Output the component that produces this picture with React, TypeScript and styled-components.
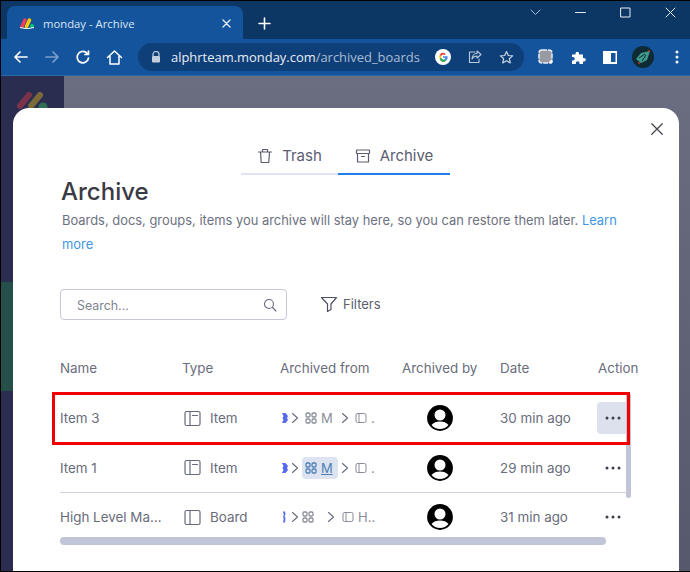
import React from 'react';
import styled, { createGlobalStyle } from 'styled-components';

const Global = createGlobalStyle`
  html, body { margin: 0; padding: 0; background: #000; }
  body { width: 690px; height: 572px; overflow: hidden; font-family: Inter, "Liberation Sans", sans-serif; }
  * { box-sizing: border-box; }
`;
const Frame = styled.div`
  width: 690px; height: 570px; margin-top: 1px; padding-left: 1px;
  display: flex; flex-direction: column; overflow: hidden;
`;
const TabStrip = styled.div`
  height: 38px; flex: none; background: #0c3764; display: flex; align-items: flex-end; padding-left: 6px; position: relative;
`;
const Tab = styled.div`
  width: 236px; height: 33px; background: #14549c; border-radius: 8px 8px 0 0;
  display: flex; align-items: center; padding: 1px 12px 0 12px; gap: 8px;
`;
const TabTitle = styled.span`
  flex: 1; color: #dbe6f2; font: 11.3px "Open Sans", "Liberation Sans", sans-serif;
`;
const NewTab = styled.div`
  margin: 0 0 0 15px; height: 33px; display: flex; align-items: center; padding-top: 1px;
`;
const WindowControls = styled.div`
  margin-left: auto; align-self: flex-start; display: flex; align-items: center; height: 22px; gap: 34px; padding-right: 14px;
`;
const Toolbar = styled.div`
  height: 37px; flex: none; background: #14549c; display: flex; align-items: center; padding: 0 0 0 12px; border-bottom: 1px solid #2c67a8;
`;
const NavGroup = styled.div`
  display: flex; align-items: center; gap: 15px;
`;
const Omnibox = styled.div`
  margin-left: 15px; width: 386px; height: 28px; border-radius: 14px; background: #0f3f78;
  display: flex; align-items: center; padding: 0 10px 0 13px; gap: 10px;
`;
const Url = styled.span`
  flex: 1; font: 12.95px "Open Sans", "Liberation Sans", sans-serif; color: #e7eef6; white-space: nowrap;
`;
const UrlPath = styled.span`
  color: #a9bdd4;
`;
const OmniIcons = styled.div`
  display: flex; align-items: center; gap: 16px;
`;
const ExtIcons = styled.div`
  margin-left: 14px; display: flex; align-items: center; gap: 17px;
`;
const ProfileIcon = styled.div`
  margin: 0 4px 0 -2px; line-height: 0;
`;
const Backdrop = styled.div`
  flex: 1; position: relative; background: linear-gradient(180deg, #6b6e80, #56596c); display: flex;
`;
const SideBar = styled.div`
  width: 63px; background: #2a2c50; position: relative; overflow: hidden;
`;
const SideBand = styled.div`
  margin-top: 206px; height: 109px; background: #25504a;
`;
const Logo = styled.svg`
  position: absolute; left: 15px; top: 15px;
`;
const Modal = styled.div`
  position: absolute; left: 12px; top: 32px; width: 666px; bottom: 0; background: #fff; border-radius: 16px 16px 0 0;
  padding: 24px 0 0 49px; color: #4f5263;
`;
const CloseBtn = styled.div`
  position: absolute; right: 15px; top: 14px; line-height: 0;
`;
const Tabs = styled.div`
  display: flex; margin-left: 179px; width: 209px; height: 43px;
`;
const TabBtn = styled.div<{ $active?: boolean; $w: number }>`
  width: ${p => p.$w}px; display: flex; align-items: center; justify-content: center; gap: 9px;
  height: 43px; padding-top: 6px; font-size: 15px; color: #5b5e6f;
  border-bottom: 2px solid ${p => (p.$active ? '#1f7fe8' : '#dfe3f2')};
`;
const Title = styled.h1`
  margin: 1px 0 0 -1px; font: 500 24px/32px Inter, sans-serif; color: #3a3b45;
`;
const Desc = styled.p`
  margin: 0; width: 570px; font-size: 12.92px; line-height: 24px; color: #6e7182;
`;
const Link = styled.a`
  color: #3f97e2;
`;
const SearchRow = styled.div`
  display: flex; align-items: center; margin: 33px 0 0 -2px;
`;
const SearchBox = styled.div`
  width: 227px; height: 31px; border: 1px solid #c5c7d9; border-radius: 4px; display: flex; align-items: center;
  padding: 1px 9px 0 16px; justify-content: space-between; color: #80838f; font-size: 12.4px;
`;
const Filters = styled.div`
  margin-left: 33px; display: flex; align-items: center; gap: 5px; padding-bottom: 2px; font-size: 13px; color: #5b5e6f;
`;
const Table = styled.div`
  margin: 36px 0 0 -2px; width: 570px; position: relative;
`;
const HeadRow = styled.div`
  display: grid; grid-template-columns: 122px 98px 122px 98px 98px 40px; height: 24px; align-items: center;
  font-size: 13.4px; color: #6a6d7c; white-space: nowrap;
`;
const Row = styled.div<{ $line?: boolean }>`
  display: grid; grid-template-columns: 122px 98px 122px 98px 98px 32px; height: 49.5px; align-items: center;
  font-size: 13.4px; color: #696c7a; white-space: nowrap;
  border-bottom: 1px solid ${p => (p.$line ? '#d0d4e6' : 'transparent')};
`;
const Rows = styled.div`
  margin-top: 14px;
`;
const TypeCell = styled.div`
  display: flex; align-items: center; gap: 9px; padding-left: 2px;
`;
const Path = styled.div`
  display: flex; align-items: center; font-size: 13px; color: #8a8d9a; gap: 2px; padding-left: 2px;
`;
const Crumb = styled.div<{ $hover?: boolean; $w: number; $pad: number }>`
  display: flex; align-items: center; gap: 4px; height: 22px; border-radius: 4px; width: ${p => p.$w}px; padding-left: ${p => p.$pad}px;
  background: ${p => (p.$hover ? '#dde3f0' : 'transparent')};
  color: ${p => (p.$hover ? '#4d7fb5' : '#8a8d9a')};
  text-decoration: ${p => (p.$hover ? 'underline' : 'none')};
`;
const AvatarCell = styled.div`
  padding-left: 25px; line-height: 0;
`;
const ActionCell = styled.div<{ $hover?: boolean }>`
  width: 32px; height: 32px; border-radius: 4px; display: flex; align-items: center; justify-content: center;
  margin-left: -1px;
  background: ${p => (p.$hover ? '#dde1ee' : 'transparent')};
`;
const VScroll = styled.div`
  position: absolute; left: 566px; top: 37px; width: 5px; height: 105px; background: #c0c5d7; border-radius: 3px;
`;
const HScroll = styled.div`
  position: absolute; left: 0; top: 181px; width: 546px; height: 8px; background: #c0c5d7; border-radius: 4px;
`;
const RedBox = styled.div`
  position: absolute; left: -8px; top: 36px; width: 578px; height: 53px; border: 3px solid #f00000;
`;

const W = ({ children, s = 16, sw = 1.5, c = 'currentColor', v = 24 }: any) => (
  <svg width={s} height={s} viewBox={`0 0 ${v} ${v}`} fill="none" stroke={c} strokeWidth={sw} strokeLinecap="round" strokeLinejoin="round">{children}</svg>
);
const ItemIcon = () => (
  <W s={17} v={17} sw={1.2} c="#676a7c"><rect x="1" y="1.5" width="15" height="14" rx="1.5" /><path d="M6 1.5v14M8.5 5.5h5" /></W>
);
const BoardIcon = () => (
  <W s={17} v={17} sw={1.2} c="#676a7c"><rect x="1" y="1.5" width="15" height="14" rx="1.5" /><path d="M6 1.5v14" /></W>
);
const Grid4 = ({ c = '#8a8d9a' }: { c?: string }) => (
  <W s={12} v={12} sw={1.3} c={c}><rect x="1" y="1" width="4" height="4" rx="1.2" /><rect x="7" y="1" width="4" height="4" rx="1.2" /><rect x="1" y="7" width="4" height="4" rx="1.2" /><rect x="7" y="7" width="4" height="4" rx="1.2" /></W>
);
const Chevron = () => (
  <W s={10} v={10} sw={1.1} c="#676a7c"><path d="M2.5 0.5l5 4.500-5 4.500" /></W>
);
const Panel = () => (
  <W s={12} v={12} sw={1} c="#8a8d9a"><rect x="1" y="1.5" width="10" height="9" rx="1.5" /><path d="M4 1.5v9" /></W>
);
const Blob = ({ thin }: { thin?: boolean }) => (
  <svg width="6" height="12" viewBox="0 0 6 12">
    {thin
      ? <path d="M1 0.500h2l.5 3-1 1.500 1 2-.5 4.500H1l.8-4-.8-2 .8-1.500z" fill="#5668ee" />
      : <path d="M0 1l3.500 0 2.500 3-1 2 1 2-2.500 3-3.500 0 1.500-3-1-2 1-2z" fill="#5668ee" />}
  </svg>
);
const Avatar = () => (
  <svg width="26" height="26" viewBox="0 0 26 26">
    <circle cx="13" cy="13" r="12.9" fill="#000" />
    <circle cx="13" cy="10" r="5.500" fill="#fff" />
    <path d="M4.500 20c2-2.500 5-3.500 8.500-3.500s6.500 1 8.500 3.500c-2 2.500-5.200 4-8.500 4s-6.500-1.500-8.500-4z" fill="#fff" />
  </svg>
);
const Dots = () => (
  <svg width="16" height="4" viewBox="0 0 16 4" fill="#3b3d4a"><circle cx="2" cy="2" r="1.500" /><circle cx="8" cy="2" r="1.500" /><circle cx="14" cy="2" r="1.500" /></svg>
);

const rows = [
  { name: 'Item 3', type: 'Item', date: '30 min ago', hoverAction: true },
  { name: 'Item 1', type: 'Item', date: '29 min ago', hoverCrumb: true, line: true },
  { name: 'High Level Ma…', type: 'Board', date: '31 min ago', board: true },
];

export default function App() {
  return (
    <Frame>
      <Global />
      <TabStrip>
        <Tab>
          <svg width="16" height="12" viewBox="0 0 16 12">
            <path d="M3 9.500L6 3" stroke="#f23c5a" strokeWidth="3.500" strokeLinecap="round" />
            <path d="M7.500 9.500L10.500 3" stroke="#ffcb00" strokeWidth="3.500" strokeLinecap="round" />
            <circle cx="13" cy="9" r="2" fill="#00ca72" />
            <path d="M1 10.500q7 2.500 14 0" stroke="#fff" strokeWidth="1" fill="none" />
          </svg>
          <TabTitle>monday - Archive</TabTitle>
          <W s={9} v={9} sw={1.4} c="#e4ecf5"><path d="M1 1l7 7M8 1l-7 7" /></W>
        </Tab>
        <NewTab>
          <W s={13} v={13} sw={1.6} c="#fff"><path d="M6.500 1v11M1 6.500h11" /></W>
        </NewTab>
        <WindowControls>
          <W s={11} v={11} sw={1} c="#a9bdd4"><path d="M1 3l4.500 4.500L10 3" /></W>
          <W s={11} v={11} sw={1} c="#dfe7f1"><path d="M0.500 5.500h10" /></W>
          <W s={11} v={11} sw={1} c="#e6edf5"><rect x="1" y="1" width="9" height="9" /></W>
          <W s={11} v={11} sw={1} c="#e6edf5"><path d="M1 1l9 9M10 1l-9 9" /></W>
        </WindowControls>
      </TabStrip>
      <Toolbar>
        <NavGroup>
          <W s={16} v={16} sw={1.7} c="#fff"><path d="M14 8H2M7 3L2 8l5 5" /></W>
          <W s={16} v={16} sw={1.7} c="#7c9fc8"><path d="M2 8h12M9 3l5 5-5 5" /></W>
          <W s={16} v={16} sw={1.7} c="#fff"><path d="M13.500 9a5.700 5.700 0 1 1-1.300-4.600M13.500 2v3.500H10" /></W>
          <W s={17} v={17} sw={1.5} c="#fff"><path d="M1.500 8.500L8.500 2l7 6.500M4 7.500v7.500h9V7.500" /></W>
        </NavGroup>
        <Omnibox>
          <svg width="10" height="12" viewBox="0 0 10 12"><path d="M2 5V3.500a3 3 0 0 1 6 0V5" stroke="#c3cfdd" fill="none" strokeWidth="1.200" /><rect x="1" y="5" width="8" height="6.500" rx="1" fill="#c3cfdd" /></svg>
          <Url>alphrteam.monday.com<UrlPath>/archived_boards</UrlPath></Url>
          <OmniIcons>
            <svg width="16" height="16" viewBox="0 0 16 16">
              <circle cx="8" cy="8" r="8" fill="#fff" />
              <path d="M8 7.200h4.600a4.700 4.700 0 0 1-1.400 4.200L9.600 10a2.200 2.200 0 0 0 .8-1.300H8z" fill="#4285f4" />
              <path d="M4.700 9.500a3.600 3.600 0 0 0 6.500 1.900L9.600 10a2 2 0 0 1-3.300-1.500z" fill="#34a853" />
              <path d="M4.700 6a3.600 3.600 0 0 0 0 3.500l1.600-1a2 2 0 0 1 0-1.500z" fill="#fbbc05" />
              <path d="M4.700 6a3.700 3.700 0 0 1 6-1.100L9.500 6a2 2 0 0 0-3.200 1z" fill="#ea4335" />
            </svg>
            <W s={16} v={16} sw={1.100} c="#b9c8da"><path d="M8 3H2.500v10.500h9.500V10M10 2l4 3.500-4 3.500V7c-3 0-4 1-5 3 0-3 2-5.500 5-5.500z" /></W>
            <W s={15} v={15} sw={1.200} c="#c9d5e3"><path d="M7.500 1.500l1.800 4 4.300.4-3.300 2.800 1 4.200-3.800-2.200-3.800 2.200 1-4.200L1.400 5.900l4.300-.4z" /></W>
          </OmniIcons>
        </Omnibox>
        <ExtIcons>
          <svg width="16" height="16" viewBox="0 0 16 16"><rect x="1" y="1" width="13" height="13" rx="3" fill="#989ba3" stroke="#e9eef5" strokeWidth="1.500" strokeDasharray="5 1" /><path d="M13 11v4M11 13h4" stroke="#fff" strokeWidth="1" /></svg>
          <svg width="15" height="15" viewBox="0 0 15 15"><path d="M1 4.500h3.500v-1a1.800 1.800 0 0 1 3.600 0v1H12V8h1a1.800 1.800 0 0 1 0 3.600h-1V14H8.500v-1a1.800 1.800 0 0 0-3.600 0v1H1v-3.500h1a1.800 1.800 0 0 0 0-3.600H1z" fill="#fff" /></svg>
          <svg width="14" height="13" viewBox="0 0 14 13"><rect x="0" y="0" width="14" height="13" fill="#fff" /><rect x="8" y="2" width="4.500" height="9" fill="#14549c" /></svg>
          <ProfileIcon>
            <svg width="22" height="22" viewBox="0 0 22 22"><circle cx="11" cy="11" r="11" fill="#0e2a33" /><path d="M4 13l5-6 9-2-3 9-6 3z" fill="#3f9c8d" /><path d="M7 12l6-4M10 15l4-6" stroke="#0e2a33" strokeWidth="1" /><circle cx="17" cy="5" r="1" fill="#c0392b" /><circle cx="7" cy="17" r="1" fill="#c0392b" /></svg>
          </ProfileIcon>
          <svg width="4" height="14" viewBox="0 0 4 14" fill="#f2f5f9"><circle cx="2" cy="2" r="1.500" /><circle cx="2" cy="7" r="1.500" /><circle cx="2" cy="12" r="1.500" /></svg>
        </ExtIcons>
      </Toolbar>
      <Backdrop>
        <SideBar>
          <Logo width="32" height="18" viewBox="0 0 32 18">
            <path d="M4 15L13 4" stroke="#7a3348" strokeWidth="6" strokeLinecap="round" />
            <path d="M15 15L24 4" stroke="#7a6a3a" strokeWidth="6" strokeLinecap="round" />
            <circle cx="27" cy="16" r="4.500" fill="#2e6f56" />
          </Logo>
          <SideBand />
        </SideBar>
        <Modal>
          <CloseBtn>
            <W s={14} v={16} sw={1.500} c="#43454f"><path d="M2 2l12 12M14 2L2 14" /></W>
          </CloseBtn>
          <Tabs>
            <TabBtn $w={97}>
              <W s={16} v={16} sw={1.200} c="#5b5e6f"><path d="M1.500 4h13M3.500 4l.7 10.500h7.600L12.500 4M5.500 4V1.500h5V4" /></W>
              Trash
            </TabBtn>
            <TabBtn $w={112} $active>
              <W s={16} v={16} sw={1.200} c="#5b5e6f"><rect x="1.500" y="2" width="13" height="3.500" rx=".5" /><path d="M2.500 5.500v8.500h11V5.500M6.500 8.500h3" /></W>
              Archive
            </TabBtn>
          </Tabs>
          <Title>Archive</Title>
          <Desc>Boards, docs, groups, items you archive will stay here, so you can restore them later. <Link>Learn</Link> <Link>more</Link></Desc>
          <SearchRow>
            <SearchBox>
              Search...
              <W s={14} v={14} sw={1.100} c="#676a7c"><circle cx="6" cy="6" r="4.500" /><path d="M9.500 9.500l3.500 3.500" /></W>
            </SearchBox>
            <Filters>
              <W s={18} v={18} sw={1.200} c="#4f5263"><path d="M1.500 2.500h15L11 9v5.500L7.500 16.500V9z" /></W>
              Filters
            </Filters>
          </SearchRow>
          <Table>
            <HeadRow>
              <span>Name</span><span>Type</span><span>Archived from</span><span>Archived by</span><span>Date</span><span>Action</span>
            </HeadRow>
            <Rows>
              {rows.map(r => (
                <Row key={r.name} $line={r.line}>
                  <span>{r.name}</span>
                  <TypeCell>{r.board ? <BoardIcon /> : <ItemIcon />}<span>{r.type}</span></TypeCell>
                  <Path>
                    <Blob thin={r.board} />
                    <Chevron />
                    {r.board
                      ? <Crumb $w={22} $pad={0}><Grid4 /></Crumb>
                      : <Crumb $hover={r.hoverCrumb} $w={36} $pad={3}><Grid4 c={r.hoverCrumb ? '#4d7fb5' : '#8a8d9a'} />M</Crumb>}
                    <Chevron />
                    <Crumb $w={40} $pad={r.board ? 4 : 3}><Panel />{r.board ? 'H..' : '.'}</Crumb>
                  </Path>
                  <AvatarCell><Avatar /></AvatarCell>
                  <span>{r.date}</span>
                  <ActionCell $hover={r.hoverAction}><Dots /></ActionCell>
                </Row>
              ))}
            </Rows>
            <VScroll />
            <HScroll />
            <RedBox />
          </Table>
        </Modal>
      </Backdrop>
    </Frame>
  );
}
